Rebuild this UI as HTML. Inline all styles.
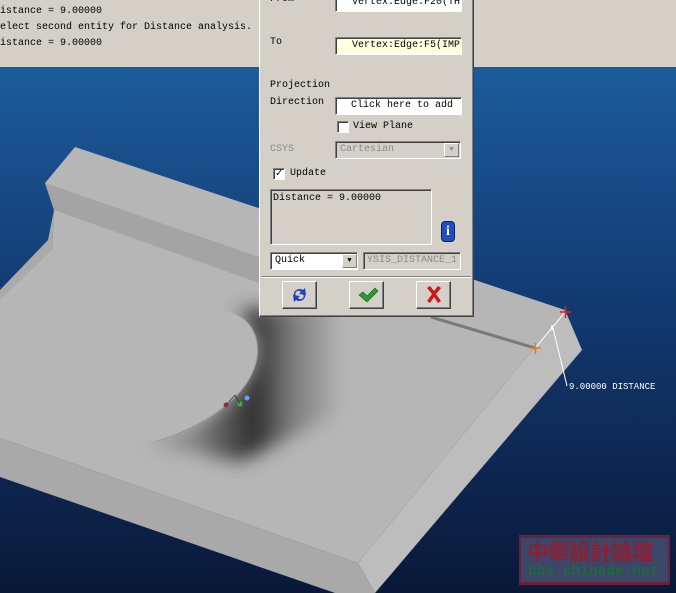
<!DOCTYPE html>
<html><head><meta charset="utf-8"><style>
*{margin:0;padding:0;box-sizing:border-box}
body{width:676px;height:593px;overflow:hidden;position:relative;background:#0d1f48;font-family:"Liberation Mono",monospace}
.a{position:absolute}
.t{font-size:10px;color:#000;white-space:pre;line-height:12px}
.fld{position:absolute;background:#fff;border:1px solid;border-color:#808080 #fff #fff #808080;box-shadow:inset 1px 1px 0 #404040;font-size:10px;line-height:15px;white-space:pre;overflow:hidden}
.btn{position:absolute;width:35px;height:28px;background:#d4d0c8;border:1px solid;border-color:#fff #404040 #404040 #fff;box-shadow:inset -1px -1px 0 #808080}
.cb{position:absolute;width:12px;height:12px;background:#fff;border:1px solid;border-color:#808080 #fff #fff #808080;box-shadow:inset 1px 1px 0 #404040}
</style></head><body>
<svg class="a" style="left:0;top:0" width="676" height="593">
<defs>
<linearGradient id="bg" x1="0" y1="0" x2="0" y2="1"><stop offset="0" stop-color="#1d5d9c"/><stop offset="0.45" stop-color="#123a72"/><stop offset="1" stop-color="#0a1838"/></linearGradient>
<linearGradient id="sh" x1="190" y1="0" x2="345" y2="0" gradientUnits="userSpaceOnUse"><stop offset="0" stop-color="#8a8a8a"/><stop offset="0.42" stop-color="#2c2c2c"/><stop offset="0.65" stop-color="#7a7a7a"/><stop offset="1" stop-color="#b6b6b6"/></linearGradient>
<filter id="bl" x="-30%" y="-30%" width="160%" height="160%"><feGaussianBlur stdDeviation="9"/></filter>
</defs>
<rect x="0" y="60" width="676" height="533" fill="url(#bg)"/>
<polygon points="0,438 358,563 375,593 335,593 0,477" fill="#a9a9a9"/>
<polygon points="565,310 582,350 375,593 358,563" fill="#bdbdbd"/>
<polygon points="75,147 45,183 54,210 52,250 0,305 0,438 358,563 565,310" fill="#b6b6b6"/>
<polygon points="45,183 54,210 262,284 262,258" fill="#a4a4a4"/>
<polygon points="54,210 52,250 0,305 0,290 48,240" fill="#aaaaaa"/>
<path d="M236,310 C272,338 268,405 150,444 L240,462 L335,415 L335,305 Z" fill="url(#sh)" filter="url(#bl)"/>
<path d="M241,317 C272,338 268,405 155,442 L0,390 L0,300 L52,250 L150,280 Z" fill="#b6b6b6"/>
<path d="M241,317 C272,338 268,405 155,442" fill="none" stroke="#999" stroke-width="1"/>
<line x1="431" y1="317" x2="535" y2="348" stroke="#7a7a7a" stroke-width="3"/>
<g stroke="#fff" stroke-width="1" fill="none"><line x1="565" y1="312" x2="535" y2="348"/><line x1="553" y1="328" x2="567" y2="386"/></g>
<path d="M552,324 l-2,6 4,0z" fill="#fff"/>
<g stroke="#e02020" stroke-width="1.5"><line x1="560" y1="312" x2="571" y2="312"/><line x1="565.5" y1="306" x2="565.5" y2="318"/></g>
<g stroke="#e08020" stroke-width="1.5"><line x1="530" y1="348" x2="541" y2="348"/><line x1="535.5" y1="343" x2="535.5" y2="354"/></g>
<circle cx="226" cy="405" r="2.5" fill="#b0204a"/><circle cx="240" cy="404" r="2.5" fill="#30c040"/><circle cx="247" cy="398" r="2.5" fill="#60a0ff"/>
<path d="M226,405 L235,395 L240,404" stroke="#333" fill="none" stroke-width="0.8"/>
<text x="569" y="389" font-family="Liberation Mono,monospace" font-size="9" fill="#fff">9.00000  DISTANCE</text>
<rect x="0" y="0" width="676" height="67" fill="#d4d0c8"/>
</svg>
<div class="a t" style="left:0;top:6px">istance = 9.00000</div>
<div class="a t" style="left:0;top:22px">elect second entity for Distance analysis.</div>
<div class="a t" style="left:0;top:38px">istance = 9.00000</div>

<div class="a" style="left:259px;top:-3px;width:215px;height:320px;background:#d4d0c8;border:1px solid;border-color:#fff #404040 #404040 #fff;box-shadow:inset -1px -1px 0 #808080"></div>
<div class="a t" style="left:270px;top:-6px">From</div>
<div class="fld" style="left:335px;top:-6px;width:127px;height:18px;padding-left:16px">Vertex:Edge:F20(TH</div>
<div class="a t" style="left:270px;top:37px">To</div>
<div class="fld" style="left:335px;top:37px;width:127px;height:18px;padding-left:16px;background:#ffffe0">Vertex:Edge:F5(IMP</div>
<div class="a t" style="left:270px;top:80px">Projection</div>
<div class="a t" style="left:270px;top:97px">Direction</div>
<div class="fld" style="left:335px;top:97px;width:127px;height:18px;padding-left:15px">Click here to add</div>
<div class="cb" style="left:337px;top:121px"></div>
<div class="a t" style="left:353px;top:121px">View Plane</div>
<div class="a t" style="left:270px;top:144px;color:#8a8a8a">CSYS</div>
<div class="fld" style="left:335px;top:141px;width:126px;height:18px;background:#d4d0c8;color:#8a8a8a;padding-left:4px">Cartesian</div>
<div class="a" style="left:444px;top:143px;width:15px;height:14px;background:#d4d0c8;border:1px solid;border-color:#fff #808080 #808080 #fff;color:#888;font-size:7px;text-align:center;line-height:12px">▼</div>
<div class="cb" style="left:273px;top:168px;font-size:11px;line-height:10px;text-align:center;font-weight:bold">✓</div>
<div class="a t" style="left:290px;top:168px">Update</div>
<div class="fld" style="left:270px;top:189px;width:162px;height:56px;background:#d4d0c8;padding:3px 2px;line-height:12px">Distance = 9.00000</div>
<div class="a" style="left:441px;top:221px;width:14px;height:21px;background:#2050c0;border:1px solid #102060;border-radius:4px;color:#fff;font:bold 14px 'Liberation Serif',serif;text-align:center;line-height:20px">i</div>
<div class="fld" style="left:270px;top:252px;width:88px;height:18px;padding-left:4px">Quick</div>
<div class="a" style="left:342px;top:254px;width:15px;height:14px;background:#d4d0c8;border:1px solid;border-color:#fff #808080 #808080 #fff;font-size:7px;text-align:center;line-height:12px">▼</div>
<div class="fld" style="left:363px;top:252px;width:98px;height:18px;background:#d4d0c8;color:#8a8a8a;padding-left:3px">YSIS_DISTANCE_1</div>
<div class="a" style="left:262px;top:276px;width:209px;height:2px;border-top:1px solid #808080;border-bottom:1px solid #fff"></div>
<div class="btn" style="left:282px;top:281px"><svg width="33" height="26"><path d="M11,15 a6,6 0 0 1 9,-7 l2,-2 1,7 -7,-1 2,-2 a3,3 0 0 0 -5,4z" fill="#2040c0"/><path d="M22,11 a6,6 0 0 1 -9,7 l-2,2 -1,-7 7,1 -2,2 a3,3 0 0 0 5,-4z" fill="#2040c0"/></svg></div>
<div class="btn" style="left:349px;top:281px"><svg width="33" height="26"><path d="M9,13 l4,-3 4,4 8,-8 3,3 -11,11z" fill="#20a030" stroke="#106020" stroke-width="0.6"/></svg></div>
<div class="btn" style="left:416px;top:281px"><svg width="33" height="26"><path d="M10,6 l3,-2 4,5 4,-5 3,2 -5,6 5,7 -3,2 -4,-6 -4,6 -3,-2 5,-7z" fill="#d01818"/></svg></div>

<div class="a" style="left:519px;top:535px;width:151px;height:50px;background:#3c4668;border:3px solid #6b2238;border-width:3px 2px 3px 2px"></div>
<div class="a" style="left:527px;top:537px;font:bold 22px 'Noto Sans CJK TC',sans-serif;color:#8e1f32;line-height:28px;letter-spacing:-1px">中華設計論壇</div>
<div class="a" style="left:528px;top:564px;font:bold 14.5px 'Liberation Mono',monospace;color:#1f6a3a;line-height:17px">bbs.chinade.net</div>
</body></html>
